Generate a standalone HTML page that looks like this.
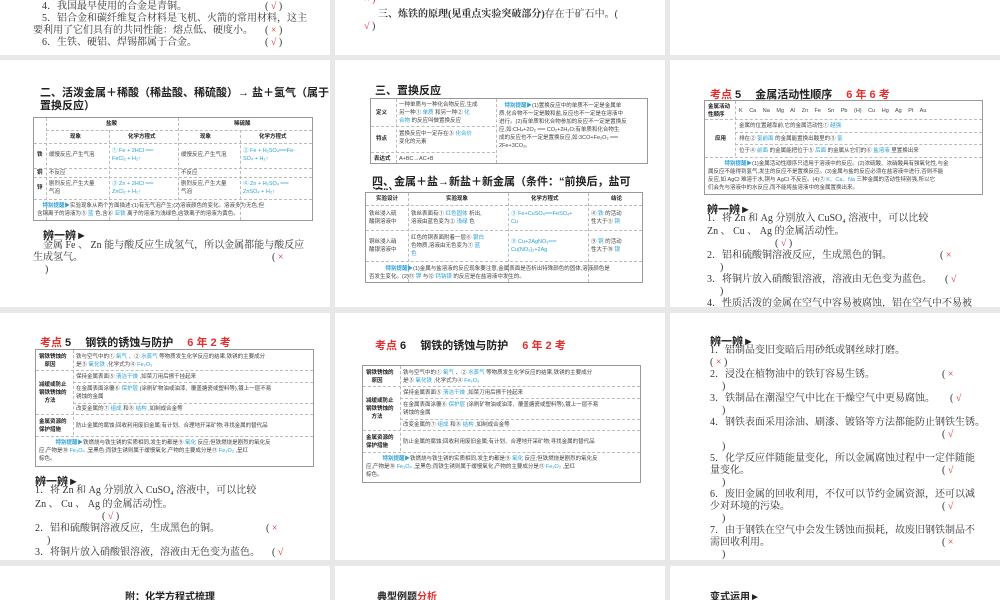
<!DOCTYPE html>
<html><head><meta charset="utf-8">
<style>
*{margin:0;padding:0;box-sizing:border-box}
body{width:1000px;height:600px;background:#e8e8e8;position:relative;overflow:hidden;font-family:"Liberation Serif","Noto Serif CJK SC","Noto Sans CJK SC",serif;color:#333}
.p{position:absolute;background:#fff;overflow:hidden}
.a{position:absolute;white-space:nowrap}
.t{font-size:10px;line-height:12px}
.h{font-family:"Liberation Sans","Noto Sans CJK SC",sans-serif;font-weight:bold;font-size:11px;color:#222}
.r{color:#e03030}
.b{color:#2a9fd6}
.tb{position:absolute;border:1px solid #999;font-size:5.5px;line-height:8px;font-family:"Liberation Sans","Noto Sans CJK SC",sans-serif;color:#444}
.tb .c{position:absolute;white-space:nowrap}
.hl{position:absolute;border-top:1px dashed #bbb;left:0;right:0}
.vl{position:absolute;border-left:1px dashed #bbb;top:0;bottom:0}
.k{font-weight:bold;color:#222}
.tip{color:#2a9fd6;font-weight:bold}
</style></head><body>

<!-- row 0 -->
<div class="p" style="left:0;top:0;width:330px;height:55px">
<div class="a t" style="left:42px;top:1px">4．我国最早使用的合金是青铜。</div><div class="a t" style="left:265px;top:1px">( <span class="r">√</span> )</div>
<div class="a t" style="left:42px;top:13px">5．铝合金和碳纤维复合材料是飞机、火箭的常用材料，这主</div>
<div class="a t" style="left:33px;top:25px">要利用了它们具有的共同性能：熔点低、硬度小。</div><div class="a t" style="left:265px;top:25px">( <span class="r">×</span> )</div>
<div class="a t" style="left:42px;top:37px">6．生铁、硬铝、焊锡都属于合金。</div><div class="a t" style="left:265px;top:37px">( <span class="r">√</span> )</div>
</div>
<div class="p" style="left:335px;top:0;width:330px;height:55px">
<div class="a t r" style="left:29px;top:-6px">× )</div>
<div class="a t" style="left:43px;top:9px"><b>三、炼铁的原理(见重点实验突破部分)</b>存在于矿石中。(</div>
<div class="a t" style="left:29px;top:21px"><span class="r">√</span> )</div>
</div>
<div class="p" style="left:670px;top:0;width:330px;height:55px"></div>

<!-- row 1 -->
<div class="p" style="left:0;top:60px;width:330px;height:247px">
<div class="a h" style="left:40px;top:24px">二、活泼金属＋稀酸（稀盐酸、稀硫酸）→ 盐＋氢气（属于</div>
<div class="a h" style="left:40px;top:37px">置换反应）</div>
<div class="tb" style="left:33px;top:57px;width:280px;height:104px">
 <div class="vl" style="left:12px"></div><div class="vl" style="left:75px;top:12px"></div><div class="vl" style="left:144px"></div><div class="vl" style="left:206px;top:12px"></div>
 <div class="hl" style="top:12px;left:12px"></div><div class="hl" style="top:25px"></div><div class="hl" style="top:50px"></div><div class="hl" style="top:59px"></div><div class="hl" style="top:81px"></div>
 <div class="c k" style="left:72px;top:2px">盐酸</div><div class="c k" style="left:200px;top:2px">稀硫酸</div>
 <div class="c k" style="left:36px;top:15px">现象</div><div class="c k" style="left:94px;top:15px">化学方程式</div><div class="c k" style="left:166px;top:15px">现象</div><div class="c k" style="left:225px;top:15px">化学方程式</div>
 <div class="c k" style="left:3px;top:33px">铁</div><div class="c" style="left:15px;top:33px">缓慢反应,产生气泡</div><div class="c b" style="left:78px;top:29px">① Fe + 2HCl ══<br>FeCl₂ + H₂↑</div><div class="c" style="left:147px;top:33px">缓慢反应,产生气泡</div><div class="c b" style="left:209px;top:29px">② Fe + H₂SO₄══Fe-<br>SO₄ + H₂↑</div>
 <div class="c k" style="left:3px;top:51px">铜</div><div class="c" style="left:15px;top:51px">不反应</div><div class="c" style="left:147px;top:51px">不反应</div>
 <div class="c k" style="left:3px;top:66px">锌</div><div class="c" style="left:15px;top:62px">剧烈反应,产生大量<br>气泡</div><div class="c b" style="left:78px;top:62px">③ Zn + 2HCl ══<br>ZnCl₂ + H₂↑</div><div class="c" style="left:147px;top:62px">剧烈反应,产生大量<br>气泡</div><div class="c b" style="left:209px;top:62px">④ Zn + H₂SO₄ ══<br>ZnSO₄ + H₂↑</div>
 <div class="c" style="left:3px;top:84px"><span class="tip">　特别提醒▶</span>实验现象从两个方面描述:(1)有无气泡产生;(2)溶液颜色的变化。溶液多为无色,但<br>含铜离子的溶液为⑤ <span class="b">蓝</span> 色,含⑥ <span class="b">亚铁</span> 离子的溶液为浅绿色,含铁离子的溶液为黄色。</div>
</div>
<div class="a h" style="left:43px;top:167px">辨一辨►</div>
<div class="a t" style="left:43px;top:180px">金属 Fe 、 Zn 能与酸反应生成氢气，所以金属都能与酸反应</div>
<div class="a t" style="left:33px;top:192px">生成氢气。</div><div class="a t" style="left:272px;top:192px">( <span class="r">×</span></div>
<div class="a t" style="left:45px;top:204px">)</div>
</div>

<div class="p" style="left:335px;top:60px;width:330px;height:247px">
<div class="a h" style="left:40px;top:22px">三、置换反应</div>
<div class="tb" style="left:35px;top:38px;width:278px;height:66px">
 <div class="vl" style="left:25px"></div><div class="vl" style="left:125px"></div>
 <div class="hl" style="top:27px;right:152px"></div><div class="hl" style="top:53px;right:152px"></div>
 <div class="c k" style="left:5px;top:10px">定义</div><div class="c" style="left:28px;top:2px">一种单质与一种化合物反应,生成<br>另一种① <span class="b">单质</span> 和另一种② <span class="b">化</span><br><span class="b">合物</span> 的反应叫做置换反应</div>
 <div class="c k" style="left:5px;top:36px">特点</div><div class="c" style="left:28px;top:31px">置换反应中一定存在③ <span class="b">化合价</span><br>变化的元素</div>
 <div class="c k" style="left:3px;top:56px">表达式</div><div class="c" style="left:28px;top:56px">A+BC→AC+B</div>
 <div class="c" style="left:128px;top:3px"><span class="tip">　特别提醒▶</span>(1)置换反应中的单质不一定是金属单<br>质,化合物不一定是酸和盐,反应也不一定是在溶液中<br>进行。(2)有单质和化合物参加的反应不一定是置换反<br>应,如:CH₄+2O₂ ══ CO₂+2H₂O;有单质和化合物生<br>成的反应也不一定是置换反应,如:3CO+Fe₂O₃ ══<br>2Fe+3CO₂。</div>
</div>
<div class="a h" style="left:37px;top:113px">四、金属＋盐→新盐＋新金属（条件：“前换后，盐可</div>
<div class="a h" style="left:37px;top:124px;height:6px;overflow:hidden">溶”）</div>
<div class="tb" style="left:30px;top:132px;width:278px;height:91px">
 <div class="vl" style="left:42px"></div><div class="vl" style="left:142px"></div><div class="vl" style="left:222px"></div>
 <div class="hl" style="top:12px"></div><div class="hl" style="top:37px"></div><div class="hl" style="top:68px"></div>
 <div class="c k" style="left:10px;top:2px">实验设计</div><div class="c k" style="left:80px;top:2px">实验现象</div><div class="c k" style="left:165px;top:2px">化学方程式</div><div class="c k" style="left:245px;top:2px">结论</div>
 <div class="c" style="left:3px;top:17px">铁丝浸入硫<br>酸铜溶液中</div><div class="c" style="left:45px;top:17px">铁丝表面有① <span class="b">红色固体</span> 析出,<br>溶液由蓝色变为② <span class="b">浅绿</span> 色</div><div class="c b" style="left:145px;top:17px">③ Fe+CuSO₄══FeSO₄+<br>Cu</div><div class="c" style="left:225px;top:17px">④ <span class="b">铁</span> 的活动<br>性大于⑤ <span class="b">铜</span></div>
 <div class="c" style="left:3px;top:45px">铜丝浸入硝<br>酸银溶液中</div><div class="c" style="left:45px;top:41px">红色的铜表面附着一层⑥ <span class="b">银白</span><br>色物质,溶液由无色变为⑦ <span class="b">蓝</span><br><span class="b">色</span></div><div class="c b" style="left:145px;top:45px">⑧ Cu+2AgNO₃══<br>Cu(NO₃)₂+2Ag</div><div class="c" style="left:225px;top:45px">⑨ <span class="b">铜</span> 的活动<br>性大于⑩ <span class="b">银</span></div>
 <div class="c" style="left:3px;top:72px"><span class="tip">　　　特别提醒▶</span>(1)金属与盐溶液的反应现象要注意,金属表面是否析出特殊颜色的固体,溶液颜色是<br>否发生变化。(2)⑪ <span class="b">钾</span> 与⑫ <span class="b">钙钠镁</span> 的反应是在盐溶液中发生的。</div>
</div>
</div>

<div class="p" style="left:670px;top:60px;width:330px;height:247px">
<div class="a h" style="left:40px;top:26px"><span class="r">考点</span> 5　 金属活动性顺序　 <span class="r">6 年 6 考</span></div>
<div class="tb" style="left:34px;top:40px;width:279px;height:95px">
 <div class="vl" style="left:30px;bottom:38px"></div>
 <div class="hl" style="top:18px"></div><div class="hl" style="top:31px;left:30px"></div><div class="hl" style="top:43px;left:30px"></div><div class="hl" style="top:56px"></div>
 <div class="c k" style="left:3px;top:2px">金属活动<br>性顺序</div><div class="c" style="left:34px;top:6px;word-spacing:5px">K Ca Na Mg Al Zn Fe Sn Pb (H) Cu Hg Ag Pt Au</div>
 <div class="c k" style="left:10px;top:34px">应用</div>
 <div class="c" style="left:34px;top:21px">金属的位置越靠前,它的金属活动性① <span class="b">越强</span></div>
 <div class="c" style="left:34px;top:34px">排在② <span class="b">氢前面</span> 的金属能置换出酸里的③ <span class="b">氢</span></div>
 <div class="c" style="left:34px;top:46px">位于④ <span class="b">前面</span> 的金属能把位于⑤ <span class="b">后面</span> 的金属从它们的⑥ <span class="b">盐溶液</span> 里置换出来</div>
 <div class="c" style="left:3px;top:59px"><span class="tip">　　　特别提醒▶</span>(1)金属活动性顺序只适用于溶液中的反应。(2)浓硫酸、浓硝酸具有强氧化性,与金<br>属反应不能得到氢气,发生的反应不是置换反应。(3)金属与盐的反应必须在盐溶液中进行,否则不能<br>反应,如 AgCl 难溶于水,铜与 AgCl 不反应。(4)⑦ <span class="b">K、Ca、Na</span> 三种金属的活动性特别强,所以它<br>们会先与溶液中的水反应,而不能将盐溶液中的金属置换出来。</div>
</div>
<div class="a h" style="left:37px;top:141px">辨一辨►</div>
<div class="a t" style="left:37px;top:153px">1．将 Zn 和 Ag 分别放入 CuSO₄ 溶液中，可以比较</div>
<div class="a t" style="left:37px;top:166px">Zn 、 Cu 、 Ag 的金属活动性。</div>
<div class="a t" style="left:105px;top:178px">( <span class="r">√</span> )</div>
<div class="a t" style="left:37px;top:190px">2．铝和硫酸铜溶液反应，生成黑色的铜。</div><div class="a t" style="left:270px;top:190px">( <span class="r">×</span></div>
<div class="a t" style="left:50px;top:202px">)</div>
<div class="a t" style="left:37px;top:214px">3．将铜片放入硝酸银溶液，溶液由无色变为蓝色。</div><div class="a t" style="left:275px;top:214px">( <span class="r">√</span></div>
<div class="a t" style="left:50px;top:226px">)</div>
<div class="a t" style="left:37px;top:238px">4．性质活泼的金属在空气中容易被腐蚀，铝在空气中不易被</div>
</div>

<!-- row 2 -->
<div class="p" style="left:0;top:313px;width:330px;height:247px">
<div class="a h" style="left:40px;top:21px"><span class="r">考点</span> 5　 钢铁的锈蚀与防护　 <span class="r">6 年 2 考</span></div>
<div class="tb" style="left:35px;top:36px;width:279px;height:118px">
 <div class="vl" style="left:37px;bottom:31px"></div>
 <div class="hl" style="top:20px"></div><div class="hl" style="top:32px;left:37px"></div><div class="hl" style="top:53px;left:37px"></div><div class="hl" style="top:64px"></div><div class="hl" style="top:86px"></div>
 <div class="c k" style="left:3px;top:3px">钢铁锈蚀的<br>　原因</div><div class="c" style="left:40px;top:3px">铁与空气中的① <span class="b">氧气</span> 、② <span class="b">水蒸气</span> 等物质发生化学反应的结果,铁锈的主要成分<br>是③ <span class="b">氧化铁</span> ,化学式为④ <span class="b">Fe₂O₃</span></div>
 <div class="c k" style="left:3px;top:31px">减缓或防止<br>钢铁锈蚀的<br>　方法</div>
 <div class="c" style="left:40px;top:23px">保持金属表面⑤ <span class="b">清洁干燥</span> ,如菜刀用后擦干挂起来</div>
 <div class="c" style="left:40px;top:35px">在金属表面涂覆⑥ <span class="b">保护层</span> (涂刷矿物油或油漆、覆盖搪瓷或塑料等),镀上一层不易<br>锈蚀的金属</div>
 <div class="c" style="left:40px;top:55px">改变金属的⑦ <span class="b">组成</span> 和⑧ <span class="b">结构</span> ,如制成合金等</div>
 <div class="c k" style="left:3px;top:68px">金属资源的<br>保护措施</div><div class="c" style="left:40px;top:72px">防止金属的腐蚀;回收利用废旧金属;有计划、合理地开采矿物;寻找金属的替代品</div>
 <div class="c" style="left:3px;top:89px"><span class="tip">　　　特别提醒▶</span>铁燃烧与铁生锈的实质相同,发生的都是⑨ <span class="b">氧化</span> 反应;但铁燃烧是剧烈的氧化反<br>应,产物是⑩ <span class="b">Fe₃O₄</span> ,呈黑色;而铁生锈则属于缓慢氧化,产物的主要成分是⑪ <span class="b">Fe₂O₃</span> ,呈红<br>棕色。</div>
</div>
<div class="a h" style="left:35px;top:160px">辨一辨►</div>
<div class="a t" style="left:35px;top:172px">1．将 Zn 和 Ag 分别放入 CuSO₄ 溶液中，可以比较</div>
<div class="a t" style="left:35px;top:186px">Zn 、 Cu 、 Ag 的金属活动性。</div>
<div class="a t" style="left:102px;top:198px">( <span class="r">√</span> )</div>
<div class="a t" style="left:35px;top:210px">2．铝和硫酸铜溶液反应，生成黑色的铜。</div><div class="a t" style="left:266px;top:210px">( <span class="r">×</span></div>
<div class="a t" style="left:47px;top:222px">)</div>
<div class="a t" style="left:35px;top:234px">3．将铜片放入硝酸银溶液，溶液由无色变为蓝色。</div><div class="a t" style="left:272px;top:234px">( <span class="r">√</span></div>
</div>

<div class="p" style="left:335px;top:313px;width:330px;height:247px">
<div class="a h" style="left:40px;top:24px"><span class="r">考点</span> 6　 钢铁的锈蚀与防护　 <span class="r">6 年 2 考</span></div>
<div class="tb" style="left:27px;top:52px;width:279px;height:118px">
 <div class="vl" style="left:37px;bottom:31px"></div>
 <div class="hl" style="top:20px"></div><div class="hl" style="top:32px;left:37px"></div><div class="hl" style="top:53px;left:37px"></div><div class="hl" style="top:64px"></div><div class="hl" style="top:86px"></div>
 <div class="c k" style="left:3px;top:3px">钢铁锈蚀的<br>　原因</div><div class="c" style="left:40px;top:3px">铁与空气中的① <span class="b">氧气</span> 、② <span class="b">水蒸气</span> 等物质发生化学反应的结果,铁锈的主要成分<br>是③ <span class="b">氧化铁</span> ,化学式为④ <span class="b">Fe₂O₃</span></div>
 <div class="c k" style="left:3px;top:31px">减缓或防止<br>钢铁锈蚀的<br>　方法</div>
 <div class="c" style="left:40px;top:23px">保持金属表面⑤ <span class="b">清洁干燥</span> ,如菜刀用后擦干挂起来</div>
 <div class="c" style="left:40px;top:35px">在金属表面涂覆⑥ <span class="b">保护层</span> (涂刷矿物油或油漆、覆盖搪瓷或塑料等),镀上一层不易<br>锈蚀的金属</div>
 <div class="c" style="left:40px;top:55px">改变金属的⑦ <span class="b">组成</span> 和⑧ <span class="b">结构</span> ,如制成合金等</div>
 <div class="c k" style="left:3px;top:68px">金属资源的<br>保护措施</div><div class="c" style="left:40px;top:72px">防止金属的腐蚀;回收利用废旧金属;有计划、合理地开采矿物;寻找金属的替代品</div>
 <div class="c" style="left:3px;top:89px"><span class="tip">　　　特别提醒▶</span>铁燃烧与铁生锈的实质相同,发生的都是⑨ <span class="b">氧化</span> 反应;但铁燃烧是剧烈的氧化反<br>应,产物是⑩ <span class="b">Fe₃O₄</span> ,呈黑色;而铁生锈则属于缓慢氧化,产物的主要成分是⑪ <span class="b">Fe₂O₃</span> ,呈红<br>棕色。</div>
</div>
</div>

<div class="p" style="left:670px;top:313px;width:330px;height:247px">
<div class="a h" style="left:40px;top:20px">辨一辨►</div>
<div class="a t" style="left:40px;top:32px">1．铝制品变旧变暗后用砂纸或钢丝球打磨。</div>
<div class="a t" style="left:40px;top:44px">( <span class="r">×</span> )</div>
<div class="a t" style="left:40px;top:56px">2．浸没在植物油中的铁钉容易生锈。</div><div class="a t" style="left:272px;top:56px">( <span class="r">×</span></div>
<div class="a t" style="left:52px;top:68px">)</div>
<div class="a t" style="left:40px;top:80px">3．铁制品在潮湿空气中比在干燥空气中更易腐蚀。</div><div class="a t" style="left:280px;top:80px">( <span class="r">√</span></div>
<div class="a t" style="left:52px;top:92px">)</div>
<div class="a t" style="left:40px;top:104px">4．钢铁表面采用涂油、刷漆、镀铬等方法都能防止钢铁生锈。</div>
<div class="a t" style="left:272px;top:116px">( <span class="r">√</span></div>
<div class="a t" style="left:52px;top:128px">)</div>
<div class="a t" style="left:40px;top:140px">5．化学反应伴随能量变化，所以金属腐蚀过程中一定伴随能</div>
<div class="a t" style="left:40px;top:152px">量变化。</div><div class="a t" style="left:272px;top:152px">( <span class="r">√</span></div>
<div class="a t" style="left:52px;top:164px">)</div>
<div class="a t" style="left:40px;top:176px">6．废旧金属的回收利用，不仅可以节约金属资源，还可以减</div>
<div class="a t" style="left:40px;top:188px">少对环境的污染。</div><div class="a t" style="left:272px;top:188px">( <span class="r">√</span></div>
<div class="a t" style="left:52px;top:200px">)</div>
<div class="a t" style="left:40px;top:212px">7．由于钢铁在空气中会发生锈蚀而损耗，故废旧钢铁制品不</div>
<div class="a t" style="left:40px;top:224px">需回收利用。</div><div class="a t" style="left:272px;top:224px">( <span class="r">×</span></div>
<div class="a t" style="left:52px;top:236px">)</div>
</div>

<!-- row 3 -->
<div class="p" style="left:0;top:566px;width:330px;height:34px"><div class="a h" style="left:125px;top:22px;font-size:10px">附：化学方程式梳理</div></div>
<div class="p" style="left:335px;top:566px;width:330px;height:34px"><div class="a h" style="left:42px;top:22px;font-size:10px">典型例题<span class="r">分析</span></div></div>
<div class="p" style="left:670px;top:566px;width:330px;height:34px"><div class="a h" style="left:40px;top:22px;font-size:10px">变式运用►</div></div>
</body></html>
